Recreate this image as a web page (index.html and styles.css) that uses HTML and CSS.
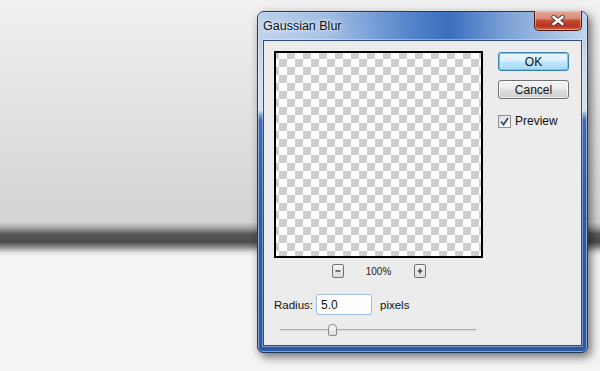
FILE: index.html
```html
<!DOCTYPE html>
<html>
<head>
    <title>Gaussian Blur</title>
    <meta charset="utf-8">
    <link rel="stylesheet" href="styles.css">
</head>
<body>
    <div class="desktop">
        <div class="window">
            <div class="titlebar">
                <span class="title">Gaussian Blur</span>
                <div class="close-btn">
                    <svg width="14" height="11" viewBox="0 0 14 11">
                        <path d="M2.5 2 L11.5 9 M11.5 2 L2.5 9" stroke="#4a3a3a" stroke-width="4.4" stroke-linecap="round" fill="none"/>
                        <path d="M2.5 2 L11.5 9 M11.5 2 L2.5 9" stroke="#ffffff" stroke-width="2.6" stroke-linecap="round" fill="none"/>
                    </svg>
                </div>
            </div>

            <div class="client">
                <div class="main-col">
                    <div class="preview-box"></div>

                    <div class="zoom-row">
                        <span class="zoom-btn">
                            <svg width="6" height="6" viewBox="0 0 6 6"><path d="M0.5 3 H5.5" stroke="#222" stroke-width="1.2"/></svg>
                        </span>
                        <span class="zoom-val">100%</span>
                        <span class="zoom-btn">
                            <svg width="6" height="6" viewBox="0 0 6 6"><path d="M0.5 3 H5.5 M3 0.5 V5.5" stroke="#222" stroke-width="1.2"/></svg>
                        </span>
                    </div>

                    <div class="radius-row">
                        <label class="radius-label" for="radius">Radius:</label>
                        <input type="text" id="radius" class="radius-input" value="5.0">
                        <span class="unit">pixels</span>
                    </div>

                    <div class="slider">
                        <div class="track"></div>
                        <div class="thumb"></div>
                    </div>
                </div>

                <div class="side-col">
                    <button class="btn btn-default">OK</button>
                    <button class="btn">Cancel</button>
                    <label class="check">
                        <span class="check-box">
                            <svg width="9" height="9" viewBox="0 0 9 9"><path d="M1 4.5 L3.5 7.5 L8 1" stroke="#3b4f75" stroke-width="1.9" fill="none"/></svg>
                        </span>
                        Preview
                    </label>
                </div>
            </div>
        </div>
    </div>
</body>
</html>
```

FILE: styles.css
```css
body {
    margin: 0;
    height: 371px;
    overflow: hidden;
    font-family: "Liberation Sans", Arial, sans-serif;
    font-size: 11.5px;
    color: #111;
    background: linear-gradient(to bottom,
        #f1f1f1 0px, #e6e6e6 80px, #d4d4d4 222px, #a5a5a5 228px,
        #575757 234px, #4c4c4c 242px, #8a8a8a 247px, #dadada 252px,
        #f4f4f4 256px, #f4f4f4 100%);
}
.desktop {
    padding: 11px 0 0 257px;
}
.window {
    width: 331px;
    height: 342px;
    box-sizing: border-box;
    border: 1px solid #23395e;
    border-radius: 7px 7px 6px 6px;
    padding: 0 5px 6px;
    display: flex;
    flex-direction: column;
    background: linear-gradient(to bottom,
        #a9c1e3 0px, #c9d9ef 50px, #d2e0f2 98px, #7fa2d4 103px,
        #3d6db9 108px, #2c5ca9 200px, #2a59a6 100%);
    box-shadow: inset 0 0 0 1px rgba(255,255,255,0.45), 3px 4px 10px rgba(0,0,0,0.55);
}
.titlebar {
    height: 28px;
    margin: 0 -5px;
    padding: 0 5px;
    display: flex;
    justify-content: space-between;
    align-items: flex-start;
    border-radius: 6px 6px 0 0;
    background: linear-gradient(to right,
        rgba(200,216,238,0.6) 0%, rgba(150,182,226,0.6) 22%, #4f81c9 48%,
        #3b6ebf 58%, #7ea3d7 76%, #c3d5ed 100%);
}
.title {
    margin-top: 7px;
    font-size: 12.5px;
    color: #0d0d0d;
    text-shadow: 0 0 6px rgba(255,255,255,0.9), 0 0 3px rgba(255,255,255,0.8);
}
.close-btn {
    width: 48px;
    height: 20px;
    margin-top: -1px;
    box-sizing: border-box;
    border: 1px solid #4a1a12;
    border-top: none;
    border-radius: 0 0 5px 5px;
    display: flex;
    align-items: center;
    justify-content: center;
    background: linear-gradient(to bottom, #e7a798 0%, #d88a79 40%, #c44a30 50%, #b8341f 80%, #d2684a 100%);
    box-shadow: inset 0 0 0 1px rgba(255,210,200,0.5);
}
.client {
    flex: 1;
    display: flex;
    background-color: #ececec;
    border: 1px solid #2f4c7c;
    box-shadow: 0 0 0 1px rgba(255,255,255,0.35);
    padding: 10px 0 0 10px;
}
.main-col {
    width: 209px;
}
.preview-box {
    width: 209px;
    height: 207px;
    box-sizing: border-box;
    border: 2px solid #000;
    background-color: #fff;
    background-image: repeating-conic-gradient(#fff 0 25%, #cdcdcd 0 50%);
    background-size: 16px 16px;
    background-position: -5px -2px;
}
.zoom-row {
    height: 14px;
    display: flex;
    justify-content: center;
    align-items: center;
    gap: 22px;
    margin-top: 6px;
}
.zoom-btn {
    width: 12px;
    height: 14px;
    box-sizing: border-box;
    border: 1px solid #707070;
    border-radius: 2px;
    display: flex;
    align-items: center;
    justify-content: center;
    background: linear-gradient(to bottom, #f4f4f4, #dcdcdc);
}
.zoom-val {
    width: 26px;
    text-align: center;
    font-size: 10px;
    color: #222;
}
.radius-row {
    height: 21px;
    display: flex;
    align-items: center;
    margin-top: 16px;
}
.radius-label {
    width: 42px;
}
.radius-input {
    width: 56px;
    height: 21px;
    box-sizing: border-box;
    border: 1px solid #9fbde3;
    border-radius: 2px;
    padding: 0 4px;
    font-family: "Liberation Sans", Arial, sans-serif;
    font-size: 12px;
    color: #111;
    background-color: #fff;
}
.unit {
    margin-left: 8px;
}
.slider {
    position: relative;
    width: 196px;
    height: 12px;
    margin: 9px 0 0 6px;
}
.track {
    position: relative;
    top: 5px;
    height: 2px;
    border-top: 1px solid #a8a8a8;
    background-color: #e2e2e2;
}
.thumb {
    position: absolute;
    left: 48px;
    top: 0;
    width: 9px;
    height: 12px;
    box-sizing: border-box;
    border: 1px solid #8a8a8a;
    border-radius: 4px 4px 2px 2px;
    background: linear-gradient(to bottom, #fafafa, #dedede);
}
.side-col {
    margin-left: 15px;
    padding-top: 1px;
    display: flex;
    flex-direction: column;
}
.btn {
    width: 71px;
    height: 19px;
    margin-bottom: 9px;
    padding: 0;
    border: 1px solid #707070;
    border-radius: 3px;
    font-family: "Liberation Sans", Arial, sans-serif;
    font-size: 12px;
    color: #111;
    background: linear-gradient(to bottom, #f3f3f3 0%, #ebebeb 48%, #dddddd 52%, #cfcfcf 100%);
    box-shadow: inset 0 0 0 1px rgba(255,255,255,0.7);
}
.btn-default {
    border-color: #3c7fb1;
    background: linear-gradient(to bottom, #eaf6fd 0%, #d9f0fc 48%, #bee6fd 52%, #a7d9f5 100%);
    box-shadow: inset 0 0 0 1px #48d8fb;
}
.check {
    display: flex;
    align-items: center;
    margin-top: 6px;
    font-size: 12px;
}
.check-box {
    width: 13px;
    height: 13px;
    box-sizing: border-box;
    border: 1px solid #8e8f8f;
    margin-right: 4px;
    display: flex;
    align-items: center;
    justify-content: center;
    background: linear-gradient(to bottom right, #dcdcdc, #fefefe);
}
```
